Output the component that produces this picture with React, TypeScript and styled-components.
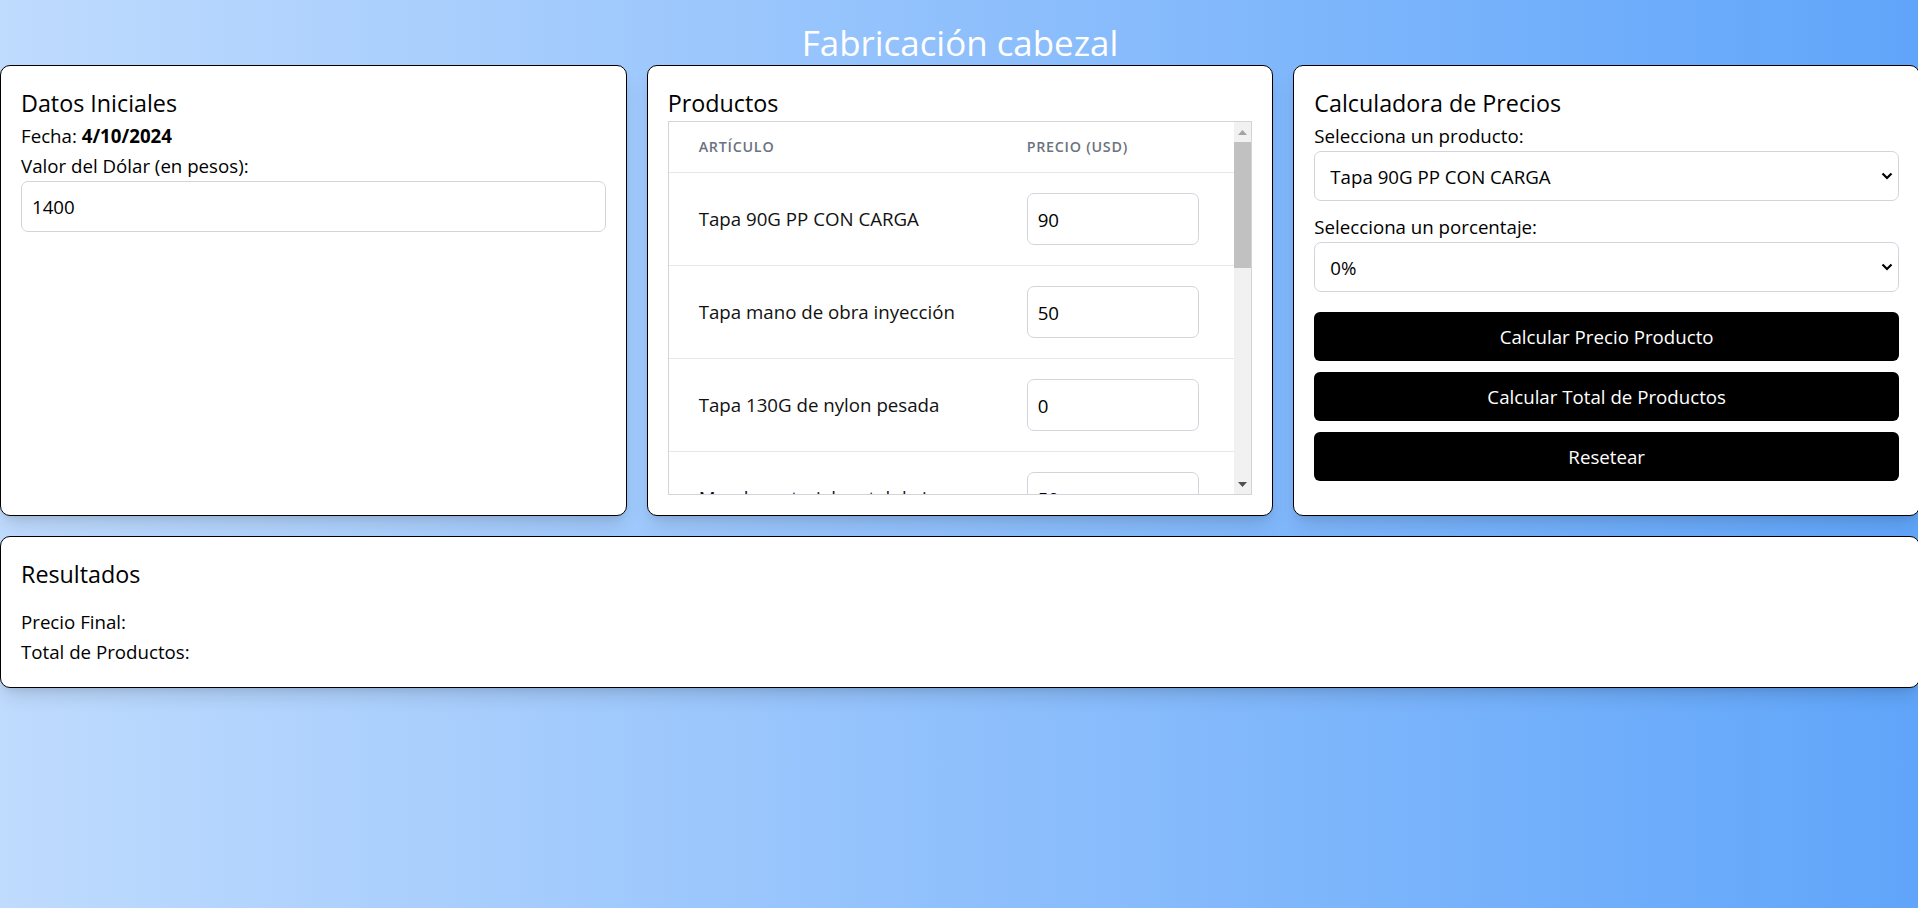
import React, { useLayoutEffect, useRef, useState } from "react";
import styled, { createGlobalStyle } from "styled-components";

const GlobalStyle = createGlobalStyle`
  html, body {
    margin: 0;
    padding: 0;
    overflow-x: hidden;
  }
  body {
    font-family: "Open Sans", "Noto Sans", sans-serif;
    color: #000;
  }
  * {
    box-sizing: border-box;
  }
`;

const Page = styled.div`
  width: 1920px;
  min-height: 100vh;
  padding-top: 20px;
  background: linear-gradient(to right, #bfdbfe, #60a5fa);
`;

const Title = styled.h1`
  margin: 0;
  text-align: center;
  color: #fff;
  font-size: 34.9px;
  font-weight: 400;
  line-height: 45px;
`;

const Grid = styled.div`
  display: grid;
  grid-template-columns: repeat(3, 1fr);
  gap: 20px;
`;

const Card = styled.section<{ $wide?: boolean }>`
  grid-column: ${(p) => (p.$wide ? "1 / -1" : "auto")};
  background: #fff;
  border: 1px solid #000;
  border-radius: 10px;
  padding: 20px;
  box-shadow: 0 12px 19px -4px rgba(0, 0, 0, 0.12), 0 5px 8px -5px rgba(0, 0, 0, 0.12);
`;

const CardTitle = styled.h2<{ $spaced?: boolean }>`
  margin: 0 0 ${(p) => (p.$spaced ? "15px" : "0")};
  font-size: 23.3px;
  font-weight: 400;
  line-height: 35px;
`;

const Line = styled.p`
  margin: 0;
  font-size: 18.7px;
  line-height: 30px;
`;

const Label = styled.label`
  display: block;
  font-size: 18.7px;
  line-height: 30px;
`;

const TextInput = styled.input<{ $small?: boolean }>`
  display: block;
  width: ${(p) => (p.$small ? "172px" : "100%")};
  height: ${(p) => (p.$small ? "52px" : "51px")};
  padding: 0 10px;
  border: 1px solid #d1d5db;
  border-radius: 7px;
  font-family: inherit;
  font-size: 18.7px;
  color: #000;
  background: #fff;
  outline: none;
`;

/* table box: the rows scroll in the viewport, the rail beside it is drawn */
const ScrollFrame = styled.div`
  display: flex;
  height: 374px;
  border: 1px solid #d1d5db;
`;

const Viewport = styled.div`
  flex: 1;
  overflow-y: auto;
  scrollbar-width: none;
  &::-webkit-scrollbar {
    display: none;
  }
`;

const Rail = styled.div`
  display: flex;
  flex-direction: column;
  width: 17px;
  flex-shrink: 0;
  background: #f1f1f1;
`;

const RailButton = styled.div`
  display: flex;
  align-items: center;
  justify-content: center;
  height: 20px;
  flex-shrink: 0;
`;

const Track = styled.div`
  position: relative;
  flex: 1;
`;

const Thumb = styled.div`
  position: absolute;
  left: 0;
  right: 0;
  background: #c1c1c1;
`;

const Table = styled.table`
  width: 100%;
  border-collapse: collapse;
`;

const HeadCell = styled.th`
  text-align: left;
  padding: 15px 30px;
  font-size: 14.3px;
  font-weight: 600;
  line-height: 20px;
  letter-spacing: 0.75px;
  text-transform: uppercase;
  color: #6b7280;
  border-bottom: 1px solid #e5e7eb;
  &:first-child {
    width: 328px;
  }
`;

const Cell = styled.td`
  padding: 20px 30px;
  font-size: 18.7px;
  line-height: 30px;
  color: #111;
  vertical-align: middle;
  white-space: nowrap;
  border-bottom: 1px solid #e5e7eb;
`;

const SelectWrap = styled.div`
  position: relative;
  margin-bottom: 11px;
`;

const Select = styled.select`
  appearance: none;
  display: block;
  width: 100%;
  height: 50px;
  padding: 0 40px 0 15px;
  border: 1px solid #d1d5db;
  border-radius: 7px;
  font-family: inherit;
  font-size: 18.7px;
  color: #000;
  background: #fff;
  outline: none;
`;

const Chevron = styled.svg`
  position: absolute;
  right: 6px;
  top: 50%;
  transform: translateY(-50%);
  pointer-events: none;
`;

const Buttons = styled.div`
  display: flex;
  flex-direction: column;
  gap: 11px;
  margin-top: 20px;
`;

const Button = styled.button`
  height: 49px;
  border: 0;
  border-radius: 6px;
  background: #000;
  color: #fff;
  font-family: inherit;
  font-size: 18.7px;
  cursor: pointer;
`;

const productos = [
  { nombre: "Tapa 90G PP CON CARGA", precio: 90 },
  { nombre: "Tapa mano de obra inyección", precio: 50 },
  { nombre: "Tapa 130G de nylon pesada", precio: 0 },
  { nombre: "Mezcla material metal de inox", precio: 50 },
  { nombre: "Cuerpo cabezal aluminio", precio: 120 },
  { nombre: "Mano de obra mecanizado", precio: 80 },
  { nombre: "Tornillería", precio: 10 },
  { nombre: "Juntas y o-rings", precio: 15 },
  { nombre: "Pintura", precio: 20 },
  { nombre: "Embalaje", precio: 5 },
];

const porcentajes = ["0%", "10%", "20%", "30%", "40%", "50%"];

const SelectField = ({ options }: { options: string[] }) => (
  <SelectWrap>
    <Select defaultValue={options[0]}>
      {options.map((o) => (
        <option key={o}>{o}</option>
      ))}
    </Select>
    <Chevron width="12" height="8" viewBox="0 0 12 8">
      <path d="M1.5 1.5 L6 6 L10.5 1.5" fill="none" stroke="#000" strokeWidth="2.2" />
    </Chevron>
  </SelectWrap>
);

const Arrow = ({ up, color }: { up?: boolean; color: string }) => (
  <svg width="9" height="5" viewBox="0 0 9 5">
    <polygon points={up ? "0,5 9,5 4.5,0" : "0,0 9,0 4.5,5"} fill={color} />
  </svg>
);

const App = () => {
  const [dolar, setDolar] = useState("1400");
  const [precios, setPrecios] = useState(productos.map((p) => String(p.precio)));
  const viewRef = useRef<HTMLDivElement>(null);
  const trackRef = useRef<HTMLDivElement>(null);
  const [thumb, setThumb] = useState({ top: 0, height: 0 });

  const measure = () => {
    const view = viewRef.current;
    const track = trackRef.current;
    if (!view || !track) return;
    const trackH = track.clientHeight;
    const height = Math.max(20, (trackH * view.clientHeight) / view.scrollHeight);
    const range = view.scrollHeight - view.clientHeight;
    const top = range > 0 ? (view.scrollTop / range) * (trackH - height) : 0;
    setThumb({ top, height });
  };

  useLayoutEffect(measure, []);

  const onPrecio = (i: number, value: string) => {
    const next = [...precios];
    next[i] = value;
    setPrecios(next);
  };

  return (
    <Page>
      <GlobalStyle />
      <Title>Fabricación cabezal</Title>
      <Grid>
        <Card>
          <CardTitle>Datos Iniciales</CardTitle>
          <Line>
            Fecha: <b>4/10/2024</b>
          </Line>
          <Label htmlFor="dolar">Valor del Dólar (en pesos):</Label>
          <TextInput id="dolar" value={dolar} onChange={(e) => setDolar(e.target.value)} />
        </Card>

        <Card>
          <CardTitle>Productos</CardTitle>
          <ScrollFrame>
            <Viewport ref={viewRef} onScroll={measure}>
              <Table>
                <thead>
                  <tr>
                    <HeadCell>Artículo</HeadCell>
                    <HeadCell>Precio (USD)</HeadCell>
                  </tr>
                </thead>
                <tbody>
                  {productos.map((p, i) => (
                    <tr key={p.nombre}>
                      <Cell>{p.nombre}</Cell>
                      <Cell>
                        <TextInput $small value={precios[i]} onChange={(e) => onPrecio(i, e.target.value)} />
                      </Cell>
                    </tr>
                  ))}
                </tbody>
              </Table>
            </Viewport>
            <Rail>
              <RailButton>
                <Arrow up color="#a3a3a3" />
              </RailButton>
              <Track ref={trackRef}>
                <Thumb style={{ top: thumb.top, height: thumb.height }} />
              </Track>
              <RailButton>
                <Arrow color="#505050" />
              </RailButton>
            </Rail>
          </ScrollFrame>
        </Card>

        <Card>
          <CardTitle>Calculadora de Precios</CardTitle>
          <Label>Selecciona un producto:</Label>
          <SelectField options={productos.map((p) => p.nombre)} />
          <Label>Selecciona un porcentaje:</Label>
          <SelectField options={porcentajes} />
          <Buttons>
            <Button>Calcular Precio Producto</Button>
            <Button>Calcular Total de Productos</Button>
            <Button>Resetear</Button>
          </Buttons>
        </Card>

        <Card $wide>
          <CardTitle $spaced>Resultados</CardTitle>
          <Line>Precio Final:</Line>
          <Line>Total de Productos:</Line>
        </Card>
      </Grid>
    </Page>
  );
};

export default App;
